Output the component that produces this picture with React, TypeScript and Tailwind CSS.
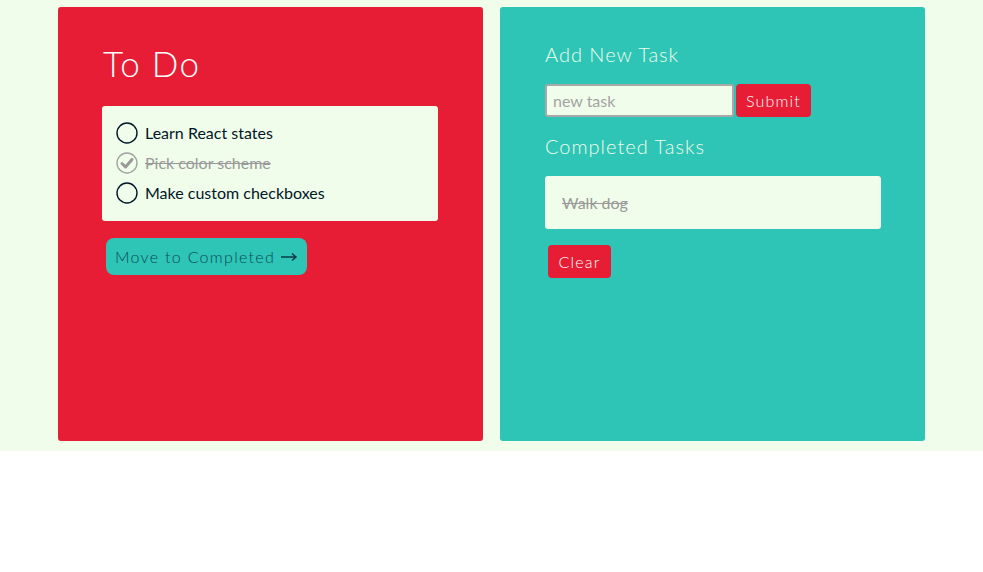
import React from "react";

const todos = [
  { text: "Learn React states", done: false },
  { text: "Pick color scheme", done: true },
  { text: "Make custom checkboxes", done: false },
];

function Check({ done }: { done: boolean }) {
  if (done) {
    return (
      <svg width="22" height="22" viewBox="0 0 22 22" className="shrink-0">
        <circle cx="11" cy="11" r="10" fill="none" stroke="#a3a3a3" strokeWidth="1.4" />
        <path d="M6 11.5l3.5 3.5L16 7.5" fill="none" stroke="#999" strokeWidth="3" strokeLinecap="round" strokeLinejoin="round" />
      </svg>
    );
  }
  return (
    <svg width="22" height="22" viewBox="0 0 22 22" className="shrink-0">
      <circle cx="11" cy="11" r="10" fill="none" stroke="#011627" strokeWidth="1.4" />
    </svg>
  );
}

export default function App() {
  return (
    <div className="bg-[#f0fdea] pt-[7px] pb-[10px] font-['Lato','Noto_Sans',sans-serif]">
      <div className="flex gap-[17px] pl-[58px]">
        <div className="h-[434px] w-[425px] rounded-[3px] bg-[#e71d36] pl-[44px] pt-[34px]">
          <h1 className="pl-[1px] text-[35px] font-light leading-[44px] tracking-[1.3px] text-[#fdfffc]">To Do</h1>
          <div className="mt-[21px] w-[336px] rounded-[3px] bg-[#f0fdea] px-[14px] pt-[12px] pb-[13px]">
            {todos.map((t) => (
              <div key={t.text} className="flex h-[30px] items-center gap-[7px]">
                <Check done={t.done} />
                <span
                  className={
                    t.done
                      ? "text-[16px] text-[#999] line-through"
                      : "text-[16px] text-[#011627]"
                  }
                >
                  {t.text}
                </span>
              </div>
            ))}
          </div>
          <button className="mt-[17px] ml-[4px] flex h-[37px] items-center gap-[6px] rounded-[8px] bg-[#2ec4b6] px-[9px] text-[16px] font-light tracking-[1.3px] text-[#0b4a58]">
            <span>Move to Completed</span>
            <svg width="17" height="10" viewBox="0 0 17 10">
              <path d="M0 5h15M11 1.5l4 3.5-4 3.5" fill="none" stroke="#0b3a48" strokeWidth="1.5" />
            </svg>
          </button>
        </div>
        <div className="h-[434px] w-[425px] rounded-[3px] bg-[#2ec4b6] pl-[45px] pt-[34px]">
          <h2 className="text-[20px] font-light leading-[26px] tracking-[1px] text-[#f0fdea]">Add New Task</h2>
          <div className="mt-[17px] flex items-center gap-[2px]">
            <input
              placeholder="new task"
              className="h-[33px] w-[189px] rounded-[3px] border-2 border-[#a9a9a9] bg-[#f0fdea] px-[6px] text-[16px] text-[#011627] outline-none placeholder:text-[#a3a3a3]"
            />
            <button className="h-[33px] w-[75px] rounded-[4px] bg-[#e71d36] text-[16px] font-light tracking-[1.2px] text-[#fdfffc]">
              Submit
            </button>
          </div>
          <h2 className="mt-[16px] text-[20px] font-light leading-[26px] tracking-[1px] text-[#f0fdea]">Completed Tasks</h2>
          <div className="mt-[17px] flex h-[53px] w-[336px] items-center rounded-[3px] bg-[#f0fdea] px-[17px]">
            <span className="text-[16px] text-[#999] line-through">Walk dog</span>
          </div>
          <button className="mt-[16px] ml-[3px] h-[33px] w-[63px] rounded-[4px] bg-[#e71d36] text-[16px] font-light tracking-[1.2px] text-[#fdfffc]">
            Clear
          </button>
        </div>
      </div>
    </div>
  );
}
